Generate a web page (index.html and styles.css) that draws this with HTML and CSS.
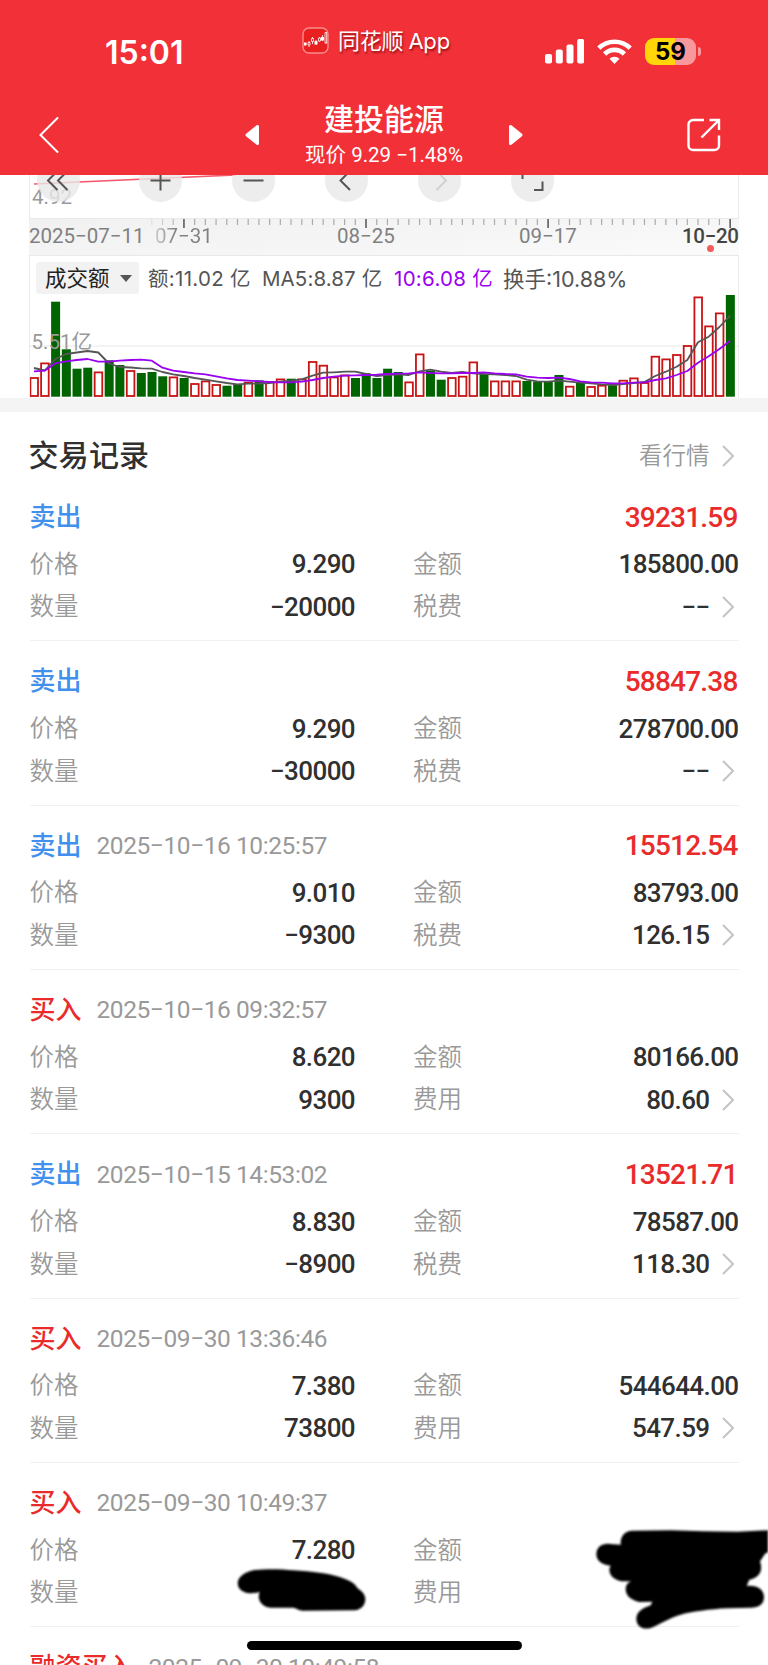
FILE: index.html
```html
<!DOCTYPE html>
<html lang="zh-CN">
<head>
    <meta charset="UTF-8">
    <meta name="viewport" content="width=device-width, initial-scale=1.0">
    <title>建投能源 - 交易记录</title>
    <link rel="stylesheet" href="styles.css">
</head>
<body>
    <div class="screen">
        <header class="header">
            <div class="status-bar">
                <div class="clock">15:01</div>
                <div class="app-tag">
                    <svg class="app-icon" viewBox="0 0 27 27">
                        <rect x="1" y="1" width="25" height="25" rx="6" fill="#e8201f" stroke="#f98a8c" stroke-width="1.4"/>
                        <path d="M2 17h2.5M7 14v6M10.500 10v7M14 13v5M17.500 10v5M20.500 8v6M24 5v12" stroke="#fff" stroke-width=".8"/>
                        <path d="M2 15.500h2.500v3H2zM12.500 14h3v3.500h-3zM19 10h3v3.500h-3z" fill="#fff"/>
                        <path d="M6 15.500h2v2.500H6zM9.500 11.500h2v3h-2zM16.500 11h2v3h-2zM23 5.500h1.700v10.500H23z" fill="#e8201f" stroke="#fff" stroke-width=".8"/>
                    </svg>
                    <span>同花顺 App</span>
                </div>
                <div class="status-icons">
                    <svg class="signal" viewBox="0 0 39 25" fill="#fff">
                        <rect x="0" y="15" width="7" height="9.500" rx="2"/>
                        <rect x="10.800" y="10.500" width="7" height="14" rx="2"/>
                        <rect x="21.500" y="5.500" width="7" height="19" rx="2"/>
                        <rect x="32.200" y="0" width="7" height="24.500" rx="2"/>
                    </svg>
                    <svg class="wifi" viewBox="0 0 35 25" fill="none" stroke="#fff" stroke-width="4.600">
                        <path d="M1.800 9.200a22.300 22.300 0 0 1 31.400 0"/>
                        <path d="M7.600 15a14 14 0 0 1 19.800 0"/>
                        <path d="M17.500 25l-5-5.300a7.300 7.300 0 0 1 10 0z" fill="#fff" stroke="none"/>
                    </svg>
                    <div class="battery"><span>59</span></div>
                </div>
            </div>
            <nav class="nav">
                <svg class="back" viewBox="0 0 20 36"><path d="M18.500 1L1.500 18l17 17"/></svg>
                <div class="stock">
                    <svg class="arrow" viewBox="0 0 15 20"><path d="M12.500 1.500v17L2 10z"/></svg>
                    <div class="stock-info">
                        <h1>建投能源</h1>
                        <p>现价 9.29 −1.48%</p>
                    </div>
                    <svg class="arrow" viewBox="0 0 15 20"><path d="M2.500 1.500v17L13 10z"/></svg>
                </div>
                <svg class="share" viewBox="0 0 34 34">
                    <path d="M17 2H6a4.500 4.500 0 0 0-4.500 4.500v21A4.500 4.500 0 0 0 6 32h21.500a4.500 4.500 0 0 0 4.500-4.500V17.500"/>
                    <path d="M22.500 2H32v10M31.500 2.500L14.500 19.500"/>
                </svg>
            </nav>
        </header>

        <section class="chart">
            <div class="price-panel">
                <svg class="price-line" viewBox="0 0 708 43">
                    <path d="M4 9L206 0" fill="none" stroke="#f5596b" stroke-width="1.700"/>
                    <text x="2" y="29">4.92</text>
                </svg>
                <div class="tools">
                    <svg viewBox="0 0 43 43"><path d="M20.500 12L11 21.500l9.500 9.500M30.500 12L21 21.500l9.500 9.500"/></svg>
                    <svg viewBox="0 0 43 43"><path d="M11.500 21.500h20M21.500 11.500v20"/></svg>
                    <svg viewBox="0 0 43 43"><path d="M11.500 21.500h20"/></svg>
                    <svg viewBox="0 0 43 43"><path d="M25 12l-9.500 9.500L25 31"/></svg>
                    <svg class="disabled" viewBox="0 0 43 43"><path d="M18.500 12l9.500 9.500-9.500 9.500"/></svg>
                    <svg viewBox="0 0 43 43"><path d="M11.500 20v-8.500H20M31.500 22.500V31H23"/></svg>
                </div>
            </div>
            <div class="axis">
                <svg class="ticks" id="ticks" viewBox="0 0 708 10"></svg>
                <div class="dates">
                    <span>2025−07−11</span>
                    <span class="d1">07−31</span>
                    <span class="d2">08−25</span>
                    <span class="d3">09−17</span>
                    <span class="today">10−20</span>
                </div>
            </div>
            <div class="volume-panel">
                <div class="legend">
                    <div class="picker">成交额 <i></i></div>
                    <span class="amount">额:11.02 亿</span>
                    <span class="ma5">MA5:8.87 亿</span>
                    <span class="ma10">10:6.08 亿</span>
                    <span class="turnover">换手:10.88%</span>
                </div>
                <svg class="volume" id="volume" viewBox="0 0 708 104"></svg>
            </div>
        </section>

        <main class="records">
            <div class="records-title">
                <h2>交易记录</h2>
                <a>看行情 <svg class="chevron" viewBox="0 0 12 22"><path d="M1 1l10 10L1 21"/></svg></a>
            </div>

            <div class="record">
                <div class="top"><b class="sell">卖出</b><em>39231.59</em></div>
                <div class="row"><label>价格</label><span>9.290</span><label>金额</label><span>185800.00</span></div>
                <div class="row"><label>数量</label><span>−20000</span><label>税费</label><span>−−</span><svg class="chevron" viewBox="0 0 12 22"><path d="M1 1l10 10L1 21"/></svg></div>
            </div>

            <div class="record">
                <div class="top"><b class="sell">卖出</b><em>58847.38</em></div>
                <div class="row"><label>价格</label><span>9.290</span><label>金额</label><span>278700.00</span></div>
                <div class="row"><label>数量</label><span>−30000</span><label>税费</label><span>−−</span><svg class="chevron" viewBox="0 0 12 22"><path d="M1 1l10 10L1 21"/></svg></div>
            </div>

            <div class="record">
                <div class="top"><b class="sell">卖出</b><time>2025−10−16 10:25:57</time><em>15512.54</em></div>
                <div class="row"><label>价格</label><span>9.010</span><label>金额</label><span>83793.00</span></div>
                <div class="row"><label>数量</label><span>−9300</span><label>税费</label><span>126.15</span><svg class="chevron" viewBox="0 0 12 22"><path d="M1 1l10 10L1 21"/></svg></div>
            </div>

            <div class="record">
                <div class="top"><b class="buy">买入</b><time>2025−10−16 09:32:57</time></div>
                <div class="row"><label>价格</label><span>8.620</span><label>金额</label><span>80166.00</span></div>
                <div class="row"><label>数量</label><span>9300</span><label>费用</label><span>80.60</span><svg class="chevron" viewBox="0 0 12 22"><path d="M1 1l10 10L1 21"/></svg></div>
            </div>

            <div class="record">
                <div class="top"><b class="sell">卖出</b><time>2025−10−15 14:53:02</time><em>13521.71</em></div>
                <div class="row"><label>价格</label><span>8.830</span><label>金额</label><span>78587.00</span></div>
                <div class="row"><label>数量</label><span>−8900</span><label>税费</label><span>118.30</span><svg class="chevron" viewBox="0 0 12 22"><path d="M1 1l10 10L1 21"/></svg></div>
            </div>

            <div class="record">
                <div class="top"><b class="buy">买入</b><time>2025−09−30 13:36:46</time></div>
                <div class="row"><label>价格</label><span>7.380</span><label>金额</label><span>544644.00</span></div>
                <div class="row"><label>数量</label><span>73800</span><label>费用</label><span>547.59</span><svg class="chevron" viewBox="0 0 12 22"><path d="M1 1l10 10L1 21"/></svg></div>
            </div>

            <div class="record">
                <div class="top"><b class="buy">买入</b><time>2025−09−30 10:49:37</time></div>
                <div class="row"><label>价格</label><span>7.280</span><label>金额</label></div>
                <div class="row"><label>数量</label><span></span><label>费用</label></div>
                <svg class="scribble scribble-left" viewBox="700 255 410 145">
                    <path d="M714 310C714 290 735 276 765 270C800 266 850 267 880 271C940 274 985 281 1020 291C1050 300 1068 312 1073 324C1088 334 1098 345 1097 360C1095 380 1080 391 1060 391L910 392C895 391 890 384 880 383L815 383C792 382 778 368 777 350L779 335C765 341 745 341 732 335C720 330 714 322 714 310Z"/>
                </svg>
                <svg class="scribble scribble-right" viewBox="630 140 522 310">
                    <path d="M710 193C708 168 722 152 745 151L860 150L960 153L1060 154L1152 150V216C1142 218 1138 230 1128 243C1136 265 1132 290 1096 298L1088 317C1120 314 1140 328 1140 350C1140 372 1125 382 1100 382L1030 384C980 386 920 395 890 403C850 415 825 434 800 443C775 450 757 436 757 415C757 393 780 382 800 375L805 364L765 365C738 358 725 345 725 326C725 314 732 306 742 303L712 303C688 298 675 284 676 265L680 256C655 254 637 242 637 222C637 200 655 188 678 191Z"/>
                </svg>
            </div>

            <div class="record">
                <div class="top"><b class="buy">融资买入</b><time>2025−09−30 10:49:58</time></div>
            </div>
        </main>

        <div class="home-indicator"></div>
    </div>
    <script src="script.js"></script>
</body>
</html>
```

FILE: styles.css
```css
* {
    margin: 0;
    padding: 0;
    box-sizing: border-box;
}

body {
    font-family: Roboto, "Noto Sans CJK SC", sans-serif;
    background: #fff;
    color: #303030;
}

.screen {
    position: relative;
    width: 768px;
    height: 1665px;
    overflow: hidden;
}

/* header */
.header {
    height: 175px;
    background: #f23038;
    color: #fff;
}

.status-bar {
    display: grid;
    grid-template-columns: 302px 1fr 223px;
    height: 94px;
}

.clock {
    padding: 33px 0 0 105px;
    font-family: Inter, sans-serif;
    font-size: 32px;
    font-weight: 600;
    line-height: 40px;
}

.app-tag {
    display: flex;
    gap: 9px;
    padding-top: 27px;
    font-family: Inter, "Noto Sans CJK SC", sans-serif;
    font-size: 22px;
    line-height: 28px;
    letter-spacing: -0.2px;
    word-spacing: -1px;
    white-space: nowrap;
    text-shadow: 1px 2px 2px rgba(90, 0, 0, 0.6);
}

.app-icon {
    width: 27px;
    height: 27px;
}

.status-icons {
    display: flex;
    align-items: flex-start;
    padding-top: 38px;
}

.signal {
    width: 39px;
    height: 25px;
    margin: 1px 13px 0 0;
}

.wifi {
    width: 35px;
    height: 25px;
    margin: 1px 13px 0 0;
}

.battery {
    position: relative;
    width: 51px;
    height: 27px;
    border-radius: 9px;
    background: linear-gradient(90deg, #ffd60a 59%, #f9989c 59%);
    color: #000;
    font-family: Inter, sans-serif;
    font-size: 24px;
    font-weight: 700;
    line-height: 28px;
    text-align: center;
}

.battery::after {
    content: "";
    position: absolute;
    top: 9px;
    right: -5px;
    width: 3px;
    height: 9px;
    border-radius: 0 3px 3px 0;
    background: #f9989c;
}

.nav {
    display: flex;
    justify-content: space-between;
    height: 81px;
    padding: 0 47px 0 39px;
}

.nav svg {
    fill: none;
    stroke: #fff;
    stroke-width: 2;
    stroke-linecap: round;
}

.back {
    width: 20px;
    height: 36px;
    margin-top: 23px;
}

.stock {
    display: flex;
    padding-left: 22px;
}

.stock-info {
    width: 248px;
    text-align: center;
}

.stock-info h1 {
    margin-top: 8px;
    font-size: 30px;
    font-weight: 500;
    line-height: 36px;
}

.stock-info p {
    margin-top: 4px;
    font-size: 20.5px;
    line-height: 27px;
}

.nav .arrow {
    width: 15px;
    height: 20px;
    margin-top: 31px;
    fill: #fff;
    stroke-width: 3;
    stroke-linejoin: round;
}

.nav .share {
    width: 34px;
    height: 34px;
    margin-top: 24px;
    stroke-width: 2.4;
    stroke-linecap: butt;
}

/* chart */
.chart {
    height: 237px;
    padding: 0 29px;
    border-bottom: 14px solid #f4f4f4;
}

.price-panel {
    position: relative;
    height: 44px;
    border: 1.5px solid #e9e9e9;
    border-top: 0;
    overflow: hidden;
}

.price-line {
    display: block;
    width: 708px;
    height: 43px;
}

.price-line text {
    font-size: 20.5px;
    fill: #999;
}

.tools {
    position: absolute;
    top: -16px;
    left: 7px;
    display: flex;
    gap: 50px;
}

.tools svg {
    width: 43px;
    height: 43px;
    border-radius: 50%;
    background: rgba(233, 233, 233, 0.8);
    fill: none;
    stroke: #555;
    stroke-width: 2;
}

.tools svg:first-child {
    margin-right: 9px;
}

.tools .disabled {
    stroke: #d0d0d0;
}

.axis {
    height: 36px;
    background: linear-gradient(175deg, #f1f1f1, #f6f6f6 60%, #fff 130%);
}

.ticks {
    display: block;
    width: 708px;
    height: 10px;
}

.dates {
    position: relative;
    display: flex;
    font-size: 20.5px;
    line-height: 24px;
    color: #808080;
    margin-top: -5px;
    white-space: nowrap;
}

.dates span {
    width: 126px;
}

.dates .d1 {
    width: 182px;
    background: linear-gradient(90deg, #ccc, #808080 20px);
    -webkit-background-clip: text;
    background-clip: text;
    color: transparent;
}

.dates .d2 {
    width: 182px;
}

.dates .d3 {
    width: 163px;
}

.dates .today {
    width: 56px;
    color: #444;
    font-weight: 500;
    letter-spacing: -0.3px;
}

.dates::after {
    content: "";
    position: absolute;
    right: 25px;
    top: 21px;
    width: 7px;
    height: 7px;
    border-radius: 50%;
    background: #f45b5b;
}

.volume-panel {
    height: 143px;
    border: 1.5px solid #e9e9e9;
    border-bottom: 0;
}

.legend {
    display: flex;
    height: 38px;
    padding: 6px 0 0 6px;
    font-family: Inter, "Noto Sans CJK SC", sans-serif;
    font-size: 20.5px;
    line-height: 34px;
    color: #555;
    white-space: nowrap;
}

.picker {
    display: flex;
    align-items: center;
    width: 103px;
    height: 32px;
    margin-right: 9px;
    padding-left: 9px;
    border-radius: 3px;
    background: #f2f2f2;
    color: #222;
    font-size: 21.5px;
}

.picker i {
    margin-left: 10px;
    border: 6px solid transparent;
    border-top: 7px solid #555;
    border-bottom: 0;
}

.legend .amount {
    width: 114px;
    letter-spacing: 0.3px;
}

.legend .ma5 {
    width: 132px;
    letter-spacing: 0.1px;
}

.legend .ma10 {
    width: 109px;
    letter-spacing: 0.3px;
    color: #9a00f0;
}

.legend .turnover {
    font-size: 21.5px;
}

.volume {
    display: block;
    width: 708px;
    height: 104px;
}

.volume text {
    font-size: 20.5px;
    fill: #999;
}

.bar-up {
    fill: #fff;
    stroke: #c81414;
    stroke-width: 1.8;
}

.bar-down {
    fill: #006400;
}

.line-ma5,
.line-ma10 {
    fill: none;
    stroke: #555;
    stroke-width: 1.8;
    stroke-linejoin: round;
}

.line-ma10 {
    stroke: #9a00f0;
}

/* records */
.records {
    padding: 0 29.5px;
}

.records-title {
    display: flex;
    justify-content: space-between;
    align-items: center;
    height: 65px;
    padding-top: 23px;
}

.records-title h2 {
    font-size: 30px;
    font-weight: 500;
    line-height: 40px;
    letter-spacing: 0.2px;
    margin-left: -1px;
}

.records-title a {
    display: flex;
    align-items: center;
    font-size: 23.5px;
    font-weight: 350;
    line-height: 32px;
    color: #999;
}

.chevron {
    width: 12px;
    height: 22px;
    margin: 0 5px 0 12px;
    fill: none;
    stroke: #c4c4c4;
    stroke-width: 2;
}

.record {
    position: relative;
    height: 164.33px;
    padding-top: 18px;
    border-bottom: 1px solid #f1f1f1;
}

.top {
    display: flex;
    align-items: center;
    height: 44px;
}

.top b {
    font-size: 26px;
    font-weight: 500;
    line-height: 40px;
    margin: 0 15px 0 0;
}

.sell {
    color: #4190ee;
}

.buy {
    color: #e92b2b;
}

.top time {
    font-size: 24.5px;
    letter-spacing: -0.43px;
    color: #999;
}

.top em {
    margin: 0 1px 0 auto;
    font-size: 28px;
    font-style: normal;
    font-weight: 500;
    letter-spacing: -0.8px;
    color: #e92b2b;
}

.row {
    display: flex;
    align-items: center;
    height: 42.5px;
    font-size: 26px;
}

.top + .row {
    margin-top: 4px;
}

.row label {
    width: 60px;
    font-size: 24.5px;
    font-weight: 350;
    line-height: 36px;
    margin-top: 1px;
    color: #999;
}

.row span {
    flex: 1;
    font-weight: 500;
    letter-spacing: -0.6px;
    text-align: right;
}

.row label + span {
    flex: 0 0 265.5px;
}

.row label ~ label {
    margin-left: 58px;
}

.row label ~ label + span {
    flex: 1;
}

.scribble {
    position: absolute;
    overflow: visible;
    filter: blur(0.8px);
}

.scribble-left {
    left: 203.8px;
    top: 102px;
    width: 136.7px;
    height: 48.3px;
}

.scribble-right {
    left: 564.5px;
    top: 63.7px;
    width: 174px;
    height: 103.3px;
}

.home-indicator {
    position: absolute;
    left: 247px;
    bottom: 15px;
    width: 275px;
    height: 9px;
    border-radius: 5px;
    background: #000;
}
```

FILE: script.js
```js
// y of the top of each bar (base line at 102.7), u = up day, d = down day
const bars = '83.3u 68.7u 7.7d 55.3d 74.7d 73.7d 77.7u 66.3d 71d 76.3u 79d 78d 82.3d 82.7u 84d 89.3u 86.7u 90.3u 91.7d 90d 88u 86.3d 87.3u 84.7u 84.7d 84.7u 67.3u 71u 82.7u 80.7u 84d 79.3d 84d 74.7d 78d 87.7u 59.7u 76.7d 85.7d 83.3u 82u 67.7u 79.7d 86.7u 86.7u 86.7u 87d 87.7d 87.3d 81d 92u 88.7d 92.3u 91u 91.3d 86u 83.7u 88.3u 62u 64.7u 60.3u 51.3u 2.7u 31.7u 18.7u 1d'.split(' ');
const ma5 = [74, 76.5, 65, 60, 58.5, 57, 58.5, 69.5, 73, 73.5, 74.3, 74.6, 78, 80.3, 82, 84, 85.6, 87.3, 89, 90.3, 89.7, 89.5, 89, 87.7, 86.7, 85.3, 81.7, 78.7, 78.3, 77.7, 77.7, 80, 82, 81, 80.3, 81, 77.3, 75.7, 77.7, 79, 78, 79.3, 80, 80.3, 81, 82, 85.7, 87.3, 87.7, 86.7, 87.7, 88.7, 89.3, 90.3, 91, 90, 89, 88, 82, 77.7, 72.7, 66, 48.3, 42.7, 33, 21.7];
const ma10 = [77.3, 76.7, 69.3, 67.3, 66, 65, 67.7, 67.7, 66.7, 66, 65.7, 66.7, 73.7, 76.7, 78, 79.3, 80.3, 82.3, 84.3, 86, 86.7, 87.3, 88, 88.3, 88.3, 87.7, 86, 84, 82.7, 81.7, 81.3, 81, 80.7, 80, 79.7, 79.3, 78.3, 79, 79.3, 79.3, 79, 79, 78.3, 79.3, 80, 80.3, 82.7, 83.7, 84, 83.7, 85, 87.3, 88.3, 88.7, 89.3, 89.3, 88.7, 88.3, 86, 84.3, 81, 77, 68.7, 62.3, 55, 46.7];

const step = 10.71;
const base = 102.7;

const line = (values, name) => {
    const points = values.map((y, i) => `${(4 + i * step).toFixed(1)},${y}`).join(' ');
    return `<polyline class="${name}" points="${points}"/>`;
};

let out = '<path d="M0 52h708" stroke="#e9e9e9" stroke-width="1"/>';
bars.forEach((bar, i) => {
    const y = parseFloat(bar);
    const x = i * step - 0.3;
    if (bar.endsWith('u')) {
        out += `<rect class="bar-up" x="${x + 0.7}" y="${y + 0.7}" width="7.6" height="${base - y - 1.4}"/>`;
    } else {
        out += `<rect class="bar-down" x="${x}" y="${y}" width="9" height="${base - y}"/>`;
    }
});
out += '<text x="1.5" y="55">5.51亿</text>';
out += line(ma5, 'line-ma5') + line(ma10, 'line-ma10');
document.getElementById('volume').innerHTML = out;

// date ruler, long tick every 17 days
let ticks = '';
for (let i = 11; i < bars.length; i++) {
    const major = (i - 14) % 17 === 0;
    const x = 5 + i * step;
    ticks += `<path d="M${x} 0v${major ? 9 : 6}" stroke="${major ? '#666' : '#aaa'}" stroke-width="${major ? 1.7 : 1.2}" opacity="${i < 14 ? (i - 10) / 4 : 1}"/>`;
}
document.getElementById('ticks').innerHTML = ticks;
```
